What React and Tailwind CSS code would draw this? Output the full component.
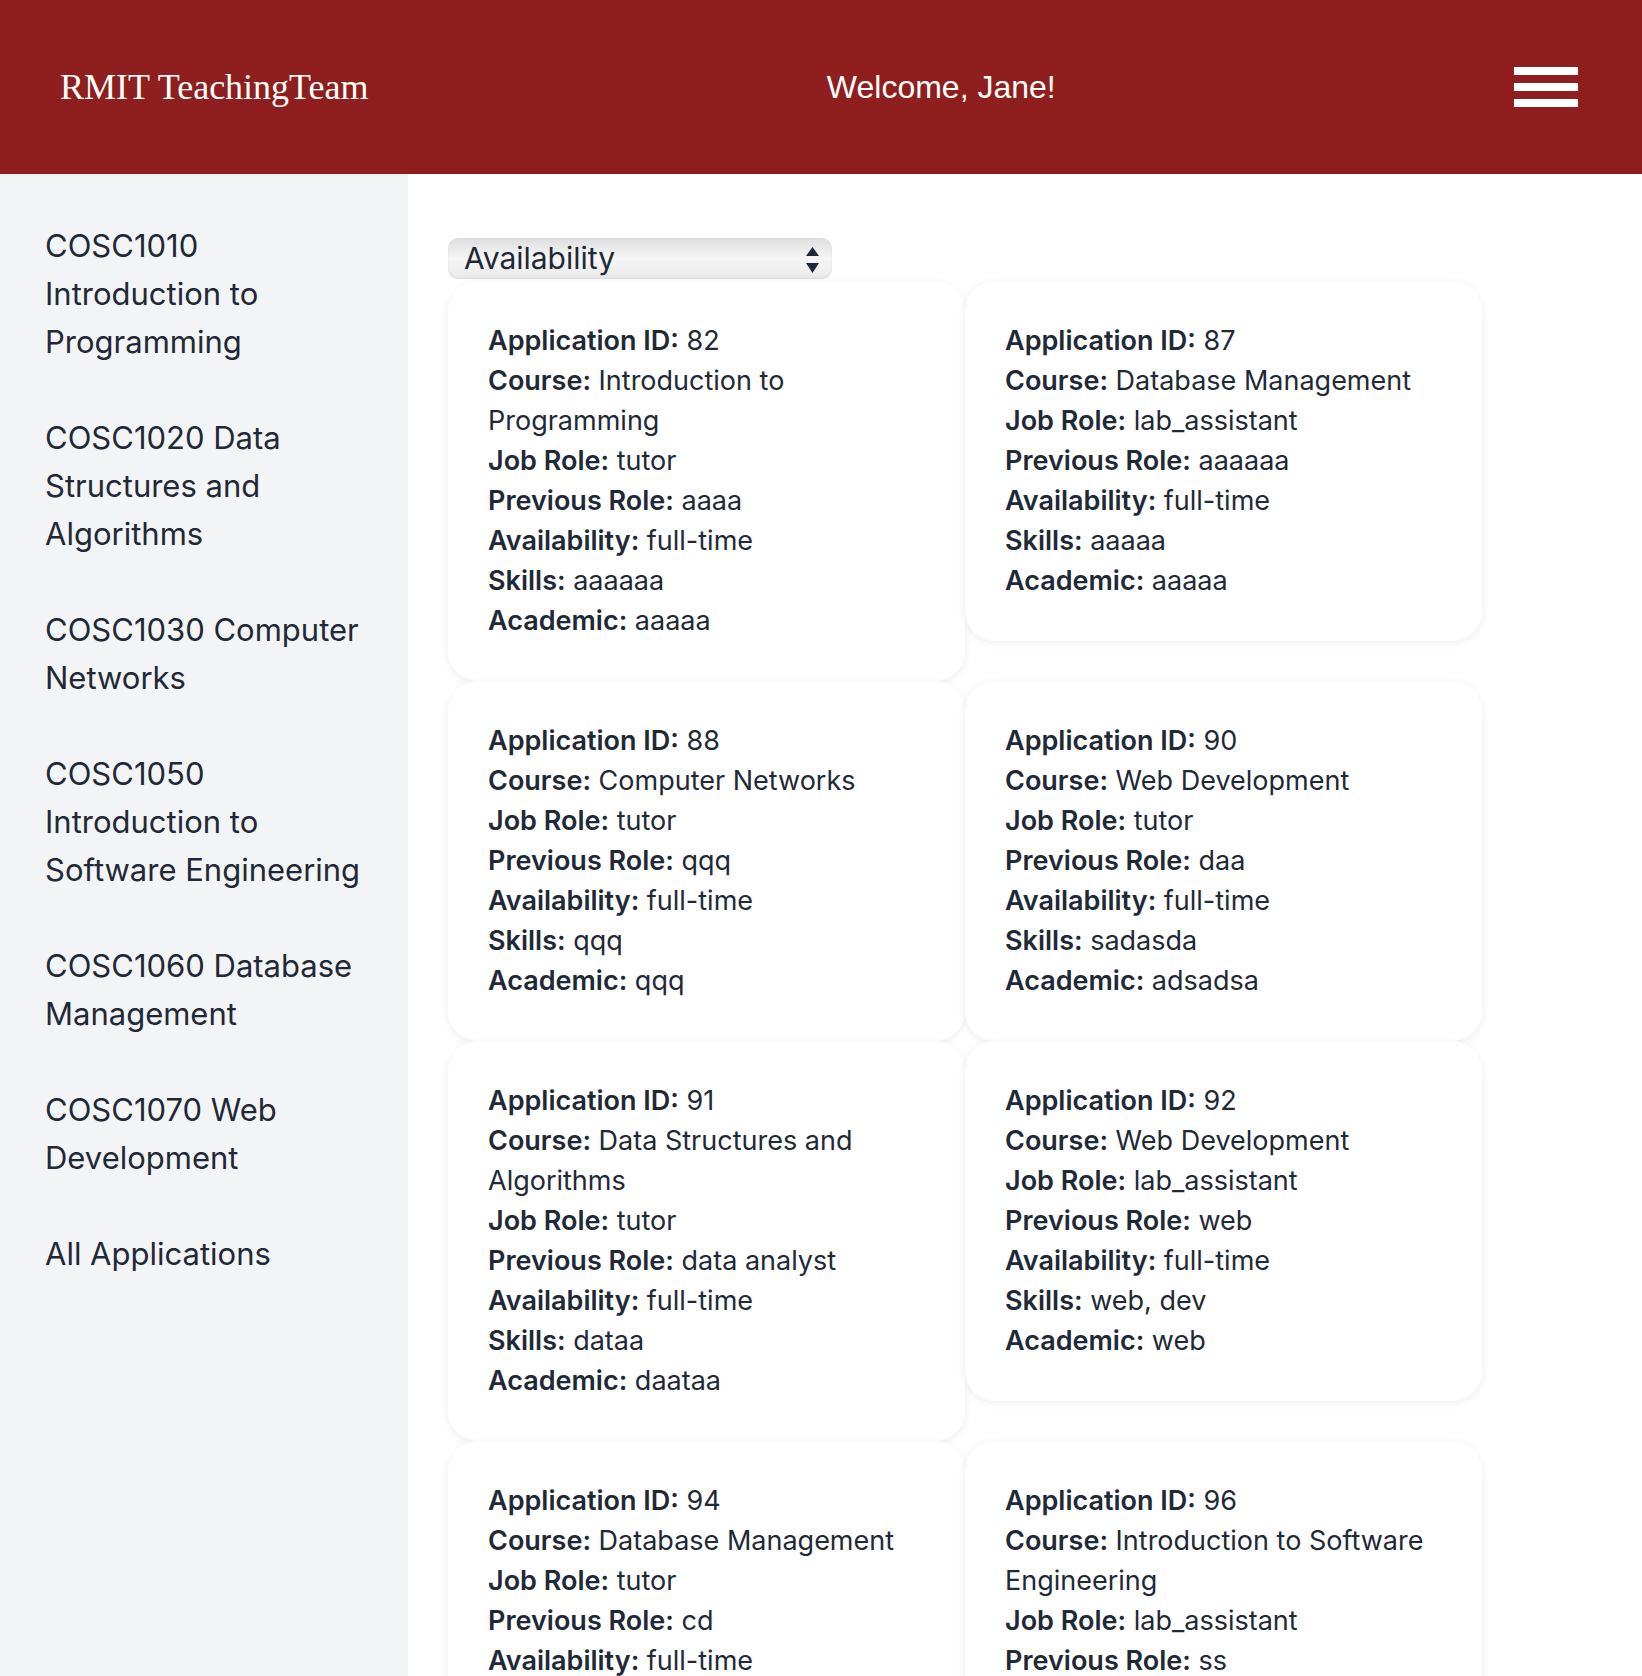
import { useState } from 'react';

const courses = [
  'COSC1010 Introduction to Programming',
  'COSC1020 Data Structures and Algorithms',
  'COSC1030 Computer Networks',
  'COSC1050 Introduction to Software Engineering',
  'COSC1060 Database Management',
  'COSC1070 Web Development',
  'All Applications',
];

const applications = [
  { id: 82, course: 'Introduction to Programming', role: 'tutor', prev: 'aaaa', avail: 'full-time', skills: 'aaaaaa', academic: 'aaaaa' },
  { id: 87, course: 'Database Management', role: 'lab_assistant', prev: 'aaaaaa', avail: 'full-time', skills: 'aaaaa', academic: 'aaaaa' },
  { id: 88, course: 'Computer Networks', role: 'tutor', prev: 'qqq', avail: 'full-time', skills: 'qqq', academic: 'qqq' },
  { id: 90, course: 'Web Development', role: 'tutor', prev: 'daa', avail: 'full-time', skills: 'sadasda', academic: 'adsadsa' },
  { id: 91, course: 'Data Structures and Algorithms', role: 'tutor', prev: 'data analyst', avail: 'full-time', skills: 'dataa', academic: 'daataa' },
  { id: 92, course: 'Web Development', role: 'lab_assistant', prev: 'web', avail: 'full-time', skills: 'web, dev', academic: 'web' },
  { id: 94, course: 'Database Management', role: 'tutor', prev: 'cd', avail: 'full-time', skills: 'cd', academic: 'cd' },
  { id: 96, course: 'Introduction to Software Engineering', role: 'lab_assistant', prev: 'ss', avail: 'full-time', skills: 'ss', academic: 'ss' },
];

function Field({ label, value }) {
  return (
    <p>
      <span className="font-semibold">{label}:</span> {value}
    </p>
  );
}

function ApplicationCard({ app }) {
  return (
    <div className="rounded-[30px] bg-white p-10 text-[27px] leading-[40px] text-[#1f2937] shadow-[0_2px_10px_rgba(0,0,0,0.07)]">
      <Field label="Application ID" value={app.id} />
      <Field label="Course" value={app.course} />
      <Field label="Job Role" value={app.role} />
      <Field label="Previous Role" value={app.prev} />
      <Field label="Availability" value={app.avail} />
      <Field label="Skills" value={app.skills} />
      <Field label="Academic" value={app.academic} />
    </div>
  );
}

export default function App() {
  const [sort, setSort] = useState('availability');

  return (
    <div className="flex h-screen flex-col overflow-hidden font-['Inter',sans-serif]">
      <header className="flex h-[174px] shrink-0 items-center justify-between bg-[#8f1f1e] pl-[60px] pr-[64px] text-white">
        <h1 className="font-['Liberation_Serif',serif] text-[36px]">RMIT TeachingTeam</h1>
        <p className="font-['Liberation_Sans',sans-serif] text-[32px]">Welcome, Jane!</p>
        <button type="button" aria-label="Open menu" className="flex w-16 flex-col gap-2">
          <span className="h-2 w-16 bg-white" />
          <span className="h-2 w-16 bg-white" />
          <span className="h-2 w-16 bg-white" />
        </button>
      </header>

      <div className="flex min-h-0 flex-1">
        <aside className="w-[408px] shrink-0 bg-[#f3f4f6] px-[45px] pt-6">
          <nav className="text-[31px] leading-[48px] text-[#1f2937]">
            {courses.map((c) => (
              <a key={c} href="#" className="block py-6">
                {c}
              </a>
            ))}
          </nav>
        </aside>

        <main className="flex-1 overflow-y-auto bg-white pl-10 pt-16 [scrollbar-width:none]">
          <div className="relative w-[384px]">
            <select
              value={sort}
              onChange={(e) => setSort(e.target.value)}
              className="h-[41px] w-full appearance-none rounded-[10px] bg-gradient-to-b from-[#dedede] via-[#f6f6f6] to-[#e9e9e9] pl-4 text-[30px] leading-[41px] text-[#1f2937] shadow-[inset_0_-1px_2px_rgba(0,0,0,0.08)] outline-none"
            >
              <option value="availability">Availability</option>
              <option value="skills">Skills</option>
              <option value="course">Course</option>
            </select>
            <svg className="pointer-events-none absolute right-[13px] top-[9px]" width="13" height="26" viewBox="0 0 13 26">
              <path d="M6.5 0 L13 9 L0 9 Z" fill="#1f2937" />
              <path d="M0 16 L13 16 L6.5 26 Z" fill="#1f2937" />
            </svg>
          </div>

          <div className="mt-[2px] grid w-[1034px] grid-cols-2 items-start pb-10">
            {applications.map((app) => (
              <ApplicationCard key={app.id} app={app} />
            ))}
          </div>
        </main>
      </div>
    </div>
  );
}
